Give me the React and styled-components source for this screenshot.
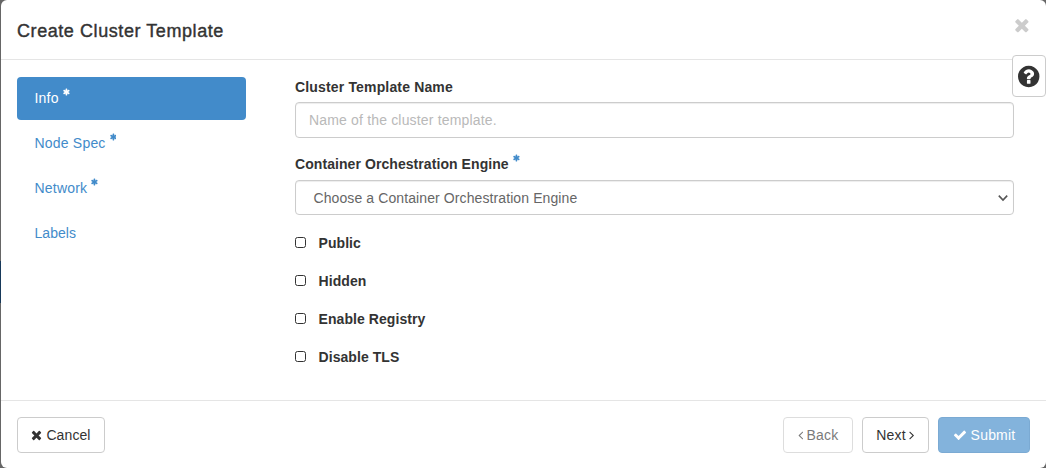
import React from 'react';
import styled, { createGlobalStyle, css } from 'styled-components';

const GlobalStyle = createGlobalStyle`
  *, *::before, *::after { box-sizing: border-box; }
  html, body { margin: 0; padding: 0; }
  body {
    background: #666;
    color: #333;
    font: 14px/20px "Liberation Sans", Arial, sans-serif;
    overflow: hidden;
  }
`;

const ICONS = {
  times: 'M1490 1322q0 40-28 68l-136 136q-28 28-68 28t-68-28l-294-294-294 294q-28 28-68 28t-68-28l-136-136q-28-28-28-68t28-68l294-294-294-294q-28-28-28-68t28-68l136-136q28-28 68-28t68 28l294 294 294-294q28-28 68-28t68 28l136 136q28 28 28 68t-28 68l-294 294 294 294q28 28 28 68z',
  check: 'M1671 566q0 40-28 68l-724 724-136 136q-28 28-68 28t-68-28l-136-136-362-362q-28-28-28-68t28-68l136-136q28-28 68-28t68 28l294 295 656-657q28-28 68-28t68 28l136 136q28 28 28 68z',
  left: 'M1203 544q0 13-10 23l-393 393 393 393q10 10 10 23t-10 23l-50 50q-10 10-23 10t-23-10l-466-466q-10-10-10-23t10-23l466-466q10-10 23-10t23 10l50 50q10 10 10 23z',
  right: 'M1171 960q0 13-10 23l-466 466q-10 10-23 10t-23-10l-50-50q-10-10-10-23t10-23l393-393-393-393q-10-10-10-23t10-23l50-50q10-10 23-10t23 10l466 466q10 10 10 23z',
  question: 'M1024 1376v-192q0-14-9-23t-23-9h-192q-14 0-23 9t-9 23v192q0 14 9 23t23 9h192q14 0 23-9t9-23zm256-672q0-88-55.500-163t-138.500-116-170.500-41q-243 0-371 213-15 24 8 42l132 100q7 6 19 6 16 0 25-12 53-68 86-92 34-24 86-24 48 0 85.500 26t37.500 59q0 38-20 61t-68 45q-63 28-115.500 86.500t-52.500 125.500v36q0 14 9 23t23 9h192q14 0 23-9t9-23q0-19 21.500-49.500t54.500-49.500q32-18 49-28.500t46-35 44.500-48 28-60.500 12.500-81zm384 192q0 209-103 385.500t-279.500 279.500-385.500 103-385.500-103-279.500-279.500-103-385.500 103-385.500 279.500-279.500 385.500-103 385.500 103 279.500 279.500 103 385.500z',
  asterisk: 'M1546 1050q46 26 59.500 77.500t-12.500 97.500l-64 110q-26 46-77.500 59.500t-97.500-12.500l-266-153v307q0 52-38 90t-90 38h-128q-52 0-90-38t-38-90v-307l-266 153q-46 26-97.500 12.500t-77.500-59.500l-64-110q-26-46-12.500-97.500t59.500-77.500l266-154-266-154q-46-26-59.500-77.500t12.500-97.500l64-110q26-46 77.500-59.500t97.500 12.500l266 153v-307q0-52 38-90t90-38h128q52 0 90 38t38 90v307l266-153q46-26 97.500-12.500t77.500 59.500l64 110q26 46 12.500 97.500t-59.500 77.500l-266 154z',
};

/* Horizontal crop of the 1792-unit icon grid: [start, width] */
const CROPS = {
  times: [192, 1408],
  check: [0, 1792],
  left: [544, 704],
  right: [544, 704],
  question: [128, 1536],
  asterisk: [128, 1536],
};

const Glyph = styled.svg`
  display: block;
  flex: none;
  fill: currentColor;
  height: ${(p) => p.$size}px;
`;

function Icon({ name, size = 14 }) {
  const [x, w] = CROPS[name];
  return (
    <Glyph $size={size} width={(size * w) / 1792} viewBox={`${x} 0 ${w} 1792`} aria-hidden="true">
      <path d={ICONS[name]} />
    </Glyph>
  );
}

const Modal = styled.div`
  position: relative;
  display: flex;
  flex-direction: column;
  height: 468px;
  margin-left: 1px;
  background: #fff;
  border-radius: 6px;
`;

const PageEdge = styled.div`
  position: absolute;
  left: 0;
  top: 261px;
  width: 1px;
  height: 42px;
  background: #17395a;
`;

const Header = styled.header`
  display: flex;
  justify-content: space-between;
  height: 60px;
  padding: 18px 16px 0 16px;
  border-bottom: 1px solid #e5e5e5;
`;

const Title = styled.h4`
  margin: 0;
  font-size: 18px;
  line-height: 26px;
  font-weight: 400;
  letter-spacing: 0.57px;
  -webkit-text-stroke: 0.4px #333;
`;

const CloseButton = styled.button`
  height: 20px;
  margin-top: -3px;
  padding: 0;
  border: 0;
  background: none;
  color: #ccc;
`;

const HelpButton = styled.button`
  position: absolute;
  right: 0;
  top: 55px;
  display: flex;
  align-items: center;
  justify-content: center;
  width: 34px;
  height: 42px;
  padding: 0;
  background: #fff;
  color: #333;
  border: 1px solid #ccc;
  border-radius: 4px;
`;

const Body = styled.main`
  display: flex;
  flex: 1;
  padding: 17px 32px 0 16px;
`;

const Steps = styled.nav`
  display: flex;
  flex-direction: column;
  gap: 2px;
  width: 229px;
  margin-right: 49px;
`;

const Step = styled.a`
  display: flex;
  height: 43px;
  padding: 11px 17.5px;
  border-radius: 4px;
  letter-spacing: ${(p) => p.$track || 0}px;
  color: ${(p) => (p.$active ? '#fff' : '#428bca')};
  background: ${(p) => (p.$active ? '#428bca' : 'transparent')};
`;

const Required = styled.sup`
  display: flex;
  margin: ${(p) => p.$top}px 0 0 4px;
  height: 8px;
  color: ${(p) => (p.$active ? '#fff' : '#428bca')};
`;

const Form = styled.form`
  flex: 1;
`;

const Label = styled.label`
  display: flex;
  height: 20px;
  font-weight: 700;
  letter-spacing: ${(p) => p.$track || 0}px;
`;

const control = css`
  display: block;
  width: 100%;
  color: #666;
  background: #fff;
  border: 1px solid #ccc;
  border-radius: 4px;
  box-shadow: inset 0 1px 1px rgba(0, 0, 0, 0.075);
  font: inherit;
`;

const TextInput = styled.input`
  ${control}
  height: 36px;
  margin: 5px 0 16px;
  padding: 0 13px;
  letter-spacing: 0.17px;
  &::placeholder { color: #b9b9b9; opacity: 1; }
`;

const SelectBox = styled.div`
  ${control}
  display: flex;
  align-items: center;
  justify-content: space-between;
  height: 35px;
  margin: 6px 0 18px;
  padding: 0 5px 0 17.5px;
  letter-spacing: 0.1px;
`;

const Checks = styled.div`
  display: flex;
  flex-direction: column;
  gap: 18px;
`;

const CheckLabel = styled(Label)`
  align-items: center;
  gap: 12.5px;
`;

const Checkbox = styled.input`
  appearance: none;
  width: 11px;
  height: 11px;
  margin: 0 0 1px;
  border: 1px solid #333;
  border-radius: 2.5px;
  background: #fff;
`;

const Footer = styled.footer`
  display: flex;
  align-items: flex-start;
  justify-content: space-between;
  height: 68px;
  padding: 16px 16px 0;
  border-top: 1px solid #e5e5e5;
`;

const Actions = styled.div`
  display: flex;
  gap: 9px;
`;

const Button = styled.button`
  display: flex;
  align-items: center;
  justify-content: center;
  gap: ${(p) => p.$gap}px;
  width: ${(p) => p.$width}px;
  height: 36px;
  padding: 0;
  font: inherit;
  letter-spacing: ${(p) => p.$track || 0}px;
  white-space: nowrap;
  border: 1px solid ${(p) => (p.$primary ? '#357ebd' : '#ccc')};
  border-radius: 4px;
  color: ${(p) => (p.$primary ? '#fff' : '#333')};
  background: ${(p) => (p.$primary ? '#428bca' : '#fff')};
  opacity: ${(p) => (p.disabled ? 0.65 : 1)};
`;

const STEPS = [
  { label: 'Info', required: true, active: true, track: 0.2 },
  { label: 'Node Spec', required: true, track: 0.2 },
  { label: 'Network', required: true, track: 0.2 },
  { label: 'Labels', track: 0.05 },
];

const OPTIONS = ['Public', 'Hidden', 'Enable Registry', 'Disable TLS'];

export default function App() {
  return (
    <>
      <GlobalStyle />
      <Modal>
        <Header>
          <Title>Create Cluster Template</Title>
          <CloseButton type="button" aria-label="Close"><Icon name="times" size={20} /></CloseButton>
        </Header>
        <Body>
          <Steps>
            {STEPS.map((s) => (
              <Step key={s.label} $active={s.active} $track={s.track}>
                <span>{s.label}</span>
                {s.required && <Required $active={s.active} $top={0}><Icon name="asterisk" size={8} /></Required>}
              </Step>
            ))}
          </Steps>
          <Form>
            <Label $track={0.16}><span>Cluster Template Name</span></Label>
            <TextInput placeholder="Name of the cluster template." />
            <Label $track={0.07}>
              <span>Container Orchestration Engine</span>
              <Required $top={0}><Icon name="asterisk" size={8} /></Required>
            </Label>
            <SelectBox role="combobox">
              <span>Choose a Container Orchestration Engine</span>
              <svg width="10" height="8" viewBox="0 0 10 8" fill="none" stroke="#555" strokeWidth="1.6">
                <path d="M0.8 1.6 5 6l4.200-4.400" />
              </svg>
            </SelectBox>
            <Checks>
              {OPTIONS.map((o) => (
                <CheckLabel key={o} $track={0.07}>
                  <Checkbox type="checkbox" />
                  <span>{o}</span>
                </CheckLabel>
              ))}
            </Checks>
          </Form>
        </Body>
        <Footer>
          <Button type="button" $width={88} $gap={4} $track={0.1}><Icon name="times" /><span>Cancel</span></Button>
          <Actions>
            <Button type="button" disabled $width={70} $gap={3.5} $track={0.2}><Icon name="left" /><span>Back</span></Button>
            <Button type="button" $width={67} $gap={3.5} $track={0.2}><span>Next</span><Icon name="right" /></Button>
            <Button type="button" disabled $primary $width={92} $gap={4} $track={0.2}><Icon name="check" /><span>Submit</span></Button>
          </Actions>
        </Footer>
        <HelpButton type="button" aria-label="Help"><Icon name="question" size={25} /></HelpButton>
      </Modal>
      <PageEdge />
    </>
  );
}
